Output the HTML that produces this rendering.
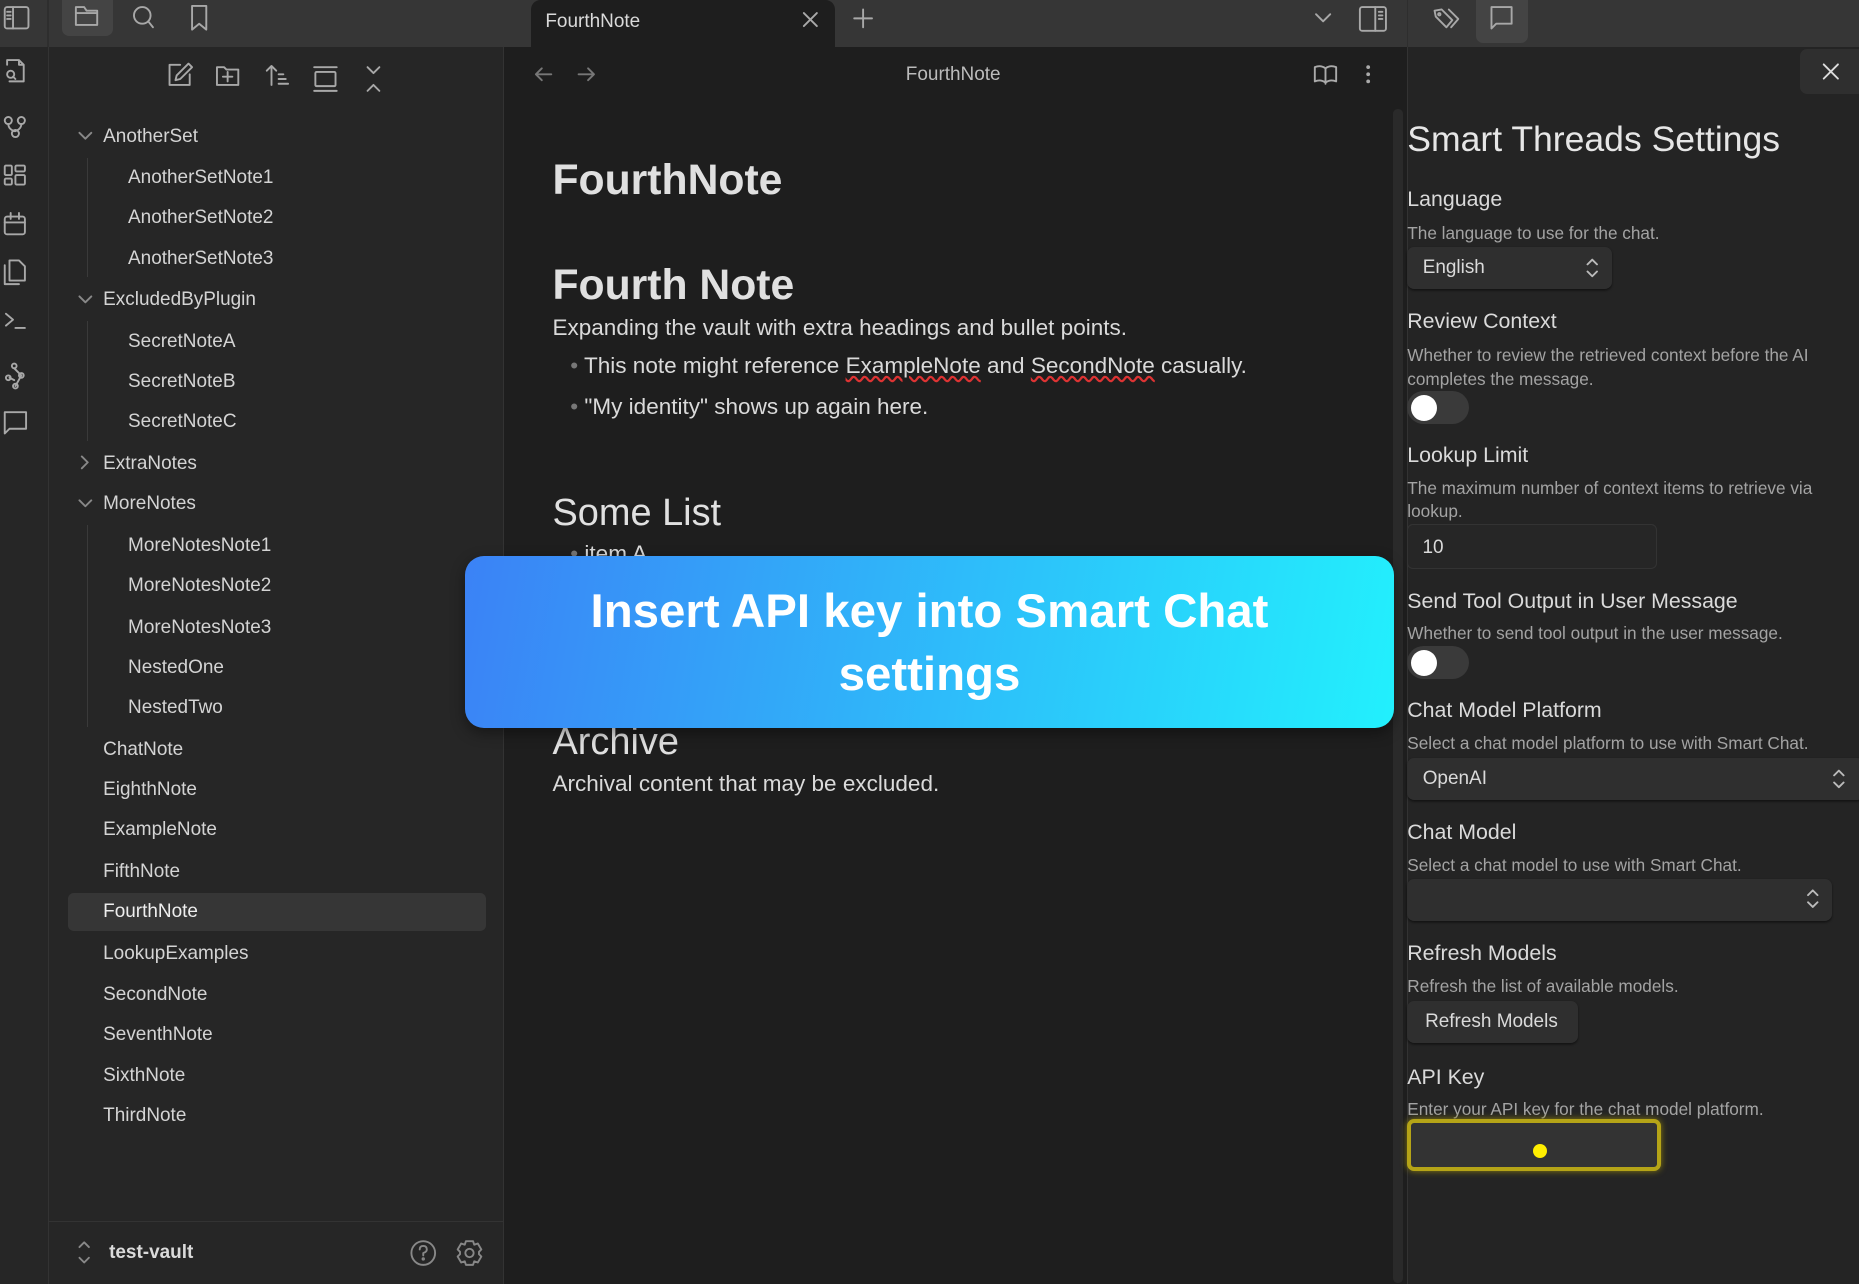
<!DOCTYPE html>
<html><head><meta charset="utf-8"><style>
*{box-sizing:border-box;margin:0;padding:0}
html,body{width:1859px;height:1284px;overflow:hidden;background:#1e1e1e}
#root{zoom:1.18559;width:1568px;height:1083px;position:relative;font-family:"Liberation Sans",sans-serif;color:#dadada;overflow:hidden}
.a{position:absolute}
svg.i{position:absolute;fill:none;stroke:#a8a8a8;stroke-width:1.6;stroke-linecap:round;stroke-linejoin:round}
.row{position:absolute;font-size:16px;color:#d4d4d4;white-space:nowrap}
.st{position:absolute;left:1187px;font-size:18px;color:#dadada;white-space:nowrap}
.sd{position:absolute;left:1187px;font-size:14.5px;color:#a3a3a3;line-height:20px;width:370px}
.tg{position:absolute;left:1187px;width:52px;height:28px;border-radius:14px;background:#3a3a3a}
.tg::after{content:"";position:absolute;left:3px;top:3px;width:22px;height:22px;border-radius:50%;background:#fff}
.sel{position:absolute;background:#2f2f2f;border-radius:6px;box-shadow:0 1px 2px rgba(0,0,0,.5);font-size:16px;color:#dadada;padding-left:13px;line-height:36px}
</style></head><body><div id="root">
<!-- top bar -->
<div class="a" style="left:0;top:0;width:1568px;height:40px;background:#363636"></div>
<div class="a" style="left:40px;top:0;width:1px;height:40px;background:#2e2e2e"></div>
<div class="a" style="left:1187px;top:0;width:1px;height:40px;background:#2e2e2e"></div>
<div class="a" style="left:52px;top:0;width:43px;height:30px;background:#444;border-radius:0 0 6px 6px"></div>
<div class="a" style="left:1245px;top:0;width:44px;height:36px;background:#444;border-radius:0 0 6px 6px"></div>
<div class="a" style="left:448px;top:0;width:256px;height:41px;background:#1e1e1e;border-radius:8px 8px 0 0"></div>
<div class="a" style="left:460px;top:9px;font-size:16px;color:#dadada">FourthNote</div>
<svg class="i" style="left:0;top:0" width="1568" height="40">
<rect x="4" y="6" width="20" height="18" rx="2"/><line x1="11" y1="6" x2="11" y2="24"/><line x1="6" y1="10" x2="9" y2="10"/><line x1="6" y1="13" x2="9" y2="13"/><line x1="6" y1="16" x2="9" y2="16"/>
<path d="M64 6h7l2 3h9v12H64z M64 11h18"/>
<circle cx="120" cy="13" r="7"/><line x1="125" y1="18" x2="129" y2="23"/>
<path d="M162 5h12v20l-6-5-6 5z"/>
<path d="M678 11l11 11M689 11l-11 11"/>
<path d="M728 8v15M720.5 15.5h15"/>
<path d="M1110 12l6 6 6-6"/>
<rect x="1147" y="6" width="22" height="20" rx="2"/><line x1="1160" y1="6" x2="1160" y2="26"/><line x1="1163" y1="10" x2="1166" y2="10"/><line x1="1163" y1="13" x2="1166" y2="13"/><line x1="1163" y1="16" x2="1166" y2="16"/>
<path d="M1210 9l6-1 9 9-5 6-9-9z M1222 8l8 8-6 7"/><circle cx="1214" cy="12" r="1"/>
<path d="M1258 6h17v14h-13l-4 4z"/>
</svg>
<!-- ribbon -->
<div class="a" style="left:0;top:40px;width:41px;height:1043px;background:#262626;border-right:1px solid #333"></div>
<svg class="i" style="left:0;top:40px" width="41" height="340">
<path d="M6 15v-4h10l4 4v14h-12 M16 11v4h4"/><circle cx="9" cy="23" r="3"/><line x1="11" y1="25" x2="13" y2="27"/>
<circle cx="7" cy="62" r="3"/><circle cx="18" cy="62" r="3"/><circle cx="13" cy="73" r="3"/><path d="M7 65q0 4 5 6M18 65q0 4-5 6"/>
<rect x="4" y="100" width="6" height="8" rx="1"/><rect x="13" y="100" width="8" height="5" rx="1"/><rect x="4" y="111" width="6" height="5" rx="1"/><rect x="13" y="108" width="8" height="8" rx="1"/>
<rect x="4" y="143" width="17" height="15" rx="2"/><line x1="4" y1="148" x2="21" y2="148"/><line x1="9" y1="140" x2="9" y2="145"/><line x1="16" y1="140" x2="16" y2="145"/>
<path d="M8 184v-4h8l5 5v12h-13z M4 184v16h12"/>
<path d="M5 225l6 5-6 5M13 237h8"/>
<circle cx="12" cy="269" r="2"/><circle cx="7" cy="279" r="2"/><circle cx="18" cy="277" r="2"/><circle cx="13" cy="286" r="2"/><path d="M12 271l6 6M18 277l-5 9M8 279l4 2"/>
<path d="M4 308h18v14h-14l-4 4z"/>
</svg>
<!-- sidebar -->
<div class="a" style="left:41px;top:40px;width:384px;height:1043px;background:#262626;border-right:1px solid #333"></div>
<svg class="i" style="left:0;top:40px" width="425" height="60">
<path d="M152 15h-9v17h17v-9 M148 28l1-4 10-10 3 3-10 10z"/>
<path d="M183 17h6l2 2h10v13h-18z M192 21v8M188 25h8"/>
<path d="M229 32v-16M225 20l4-4 4 4M235 23h4M235 27h6M235 31h8"/>
<rect x="266" y="21" width="17" height="12" rx="1"/><line x1="265" y1="17" x2="284" y2="17"/><line x1="265" y1="37" x2="284" y2="37"/>
<path d="M310 17l5 5 5-5M310 37l5-5 5 5"/>
</svg>
<div class="a" style="left:57px;top:753px;width:353px;height:32px;background:#363636;border-radius:5px"></div>
<div class="a" style="left:73px;top:133px;width:1px;height:101px;background:#3a3a3a"></div>
<div class="a" style="left:73px;top:271px;width:1px;height:101px;background:#3a3a3a"></div>
<div class="a" style="left:73px;top:443px;width:1px;height:170px;background:#3a3a3a"></div>
<svg class="i" style="left:0;top:0;stroke:#888" width="425" height="1083">
<path d="M67 112l5 5 5-5M67 250l5 5 5-5M69 385l5 5-5 5M67 422l5 5 5-5"/>
</svg>
<div class="row" style="left:87px;top:106px">AnotherSet</div>
<div class="row" style="left:108px;top:141px">AnotherSetNote1</div>
<div class="row" style="left:108px;top:175px">AnotherSetNote2</div>
<div class="row" style="left:108px;top:209px">AnotherSetNote3</div>
<div class="row" style="left:87px;top:244px">ExcludedByPlugin</div>
<div class="row" style="left:108px;top:279px">SecretNoteA</div>
<div class="row" style="left:108px;top:313px">SecretNoteB</div>
<div class="row" style="left:108px;top:347px">SecretNoteC</div>
<div class="row" style="left:87px;top:382px">ExtraNotes</div>
<div class="row" style="left:87px;top:416px">MoreNotes</div>
<div class="row" style="left:108px;top:451px">MoreNotesNote1</div>
<div class="row" style="left:108px;top:485px">MoreNotesNote2</div>
<div class="row" style="left:108px;top:520px">MoreNotesNote3</div>
<div class="row" style="left:108px;top:554px">NestedOne</div>
<div class="row" style="left:108px;top:588px">NestedTwo</div>
<div class="row" style="left:87px;top:623px">ChatNote</div>
<div class="row" style="left:87px;top:657px">EighthNote</div>
<div class="row" style="left:87px;top:691px">ExampleNote</div>
<div class="row" style="left:87px;top:726px">FifthNote</div>
<div class="row" style="left:87px;top:760px;color:#eee">FourthNote</div>
<div class="row" style="left:87px;top:795px">LookupExamples</div>
<div class="row" style="left:87px;top:830px">SecondNote</div>
<div class="row" style="left:87px;top:864px">SeventhNote</div>
<div class="row" style="left:87px;top:898px">SixthNote</div>
<div class="row" style="left:87px;top:932px">ThirdNote</div>
<div class="a" style="left:41px;top:1030px;width:384px;height:1px;background:#333"></div>
<div class="row" style="left:92px;top:1048px;font-weight:bold;color:#dadada">test-vault</div>
<svg class="i" style="left:0;top:1030px;stroke:#888" width="425" height="53">
<path d="M67 22l4-4 4 4M67 31l4 4 4-4"/>
<circle cx="357" cy="27" r="10"/><path d="M354 24q0-3 3-3t3 3q0 2-3 3v2"/><circle cx="357" cy="32" r=".6"/>
<circle cx="396" cy="27" r="3.5"/><path d="M393 17h6l1 3 3-1 3 5-2 2v2l2 2-3 5-3-1-1 3h-6l-1-3-3 1-3-5 2-2v-2l-2-2 3-5 3 1z"/>
</svg>
<!-- editor -->
<svg class="i" style="left:0;top:40px;stroke:#777" width="1187" height="50">
<path d="M452 23h13M457 18l-5 5 5 5M488 23h13M496 18l5 5-5 5"/>
<path style="stroke:#aaa" d="M1109 17q5-2 9 1 4-3 9-1v12q-5-2-9 1-4-3-9-1z M1118 18v13"/>
<circle style="fill:#aaa;stroke:none" cx="1154" cy="17" r="1.6"/><circle style="fill:#aaa;stroke:none" cx="1154" cy="23" r="1.6"/><circle style="fill:#aaa;stroke:none" cx="1154" cy="29" r="1.6"/>
</svg>
<div class="a" style="left:764px;top:54px;font-size:16px;color:#bbb">FourthNote</div>
<div class="a" style="left:1175px;top:92px;width:8px;height:990px;background:#2a2a2a;border-radius:4px"></div>
<div class="a" style="left:466px;top:132px;font-size:36px;font-weight:bold;color:#e0e0e0">FourthNote</div>
<div class="a" style="left:466px;top:220px;font-size:36px;font-weight:bold;color:#e0e0e0">Fourth Note</div>
<div class="a" style="left:466px;top:266px;font-size:19px;color:#dadada">Expanding the vault with extra headings and bullet points.</div>
<div class="a" style="left:481px;top:298px;font-size:19px;color:#dadada"><span style="color:#777">•</span> This note might reference <u style="text-decoration:underline wavy #d33">ExampleNote</u> and <u style="text-decoration:underline wavy #d33">SecondNote</u> casually.</div>
<div class="a" style="left:481px;top:332px;font-size:19px;color:#dadada"><span style="color:#777">•</span> "My identity" shows up again here.</div>
<div class="a" style="left:466px;top:415px;font-size:32px;color:#e0e0e0">Some List</div>
<div class="a" style="left:481px;top:456px;font-size:19px;color:#dadada"><span style="color:#777">•</span> item A</div>
<div class="a" style="left:466px;top:608px;font-size:32px;color:#e0e0e0">Archive</div>
<div class="a" style="left:466px;top:650px;font-size:19px;color:#dadada">Archival content that may be excluded.</div>
<!-- right panel -->
<div class="a" style="left:1187px;top:40px;width:381px;height:1043px;background:#242424;border-left:1px solid #333"></div>
<div class="a" style="left:1518px;top:41px;width:55px;height:38px;background:#2f2f2f;border-radius:6px"></div>
<svg class="i" style="left:1518px;top:41px;stroke:#ddd" width="50" height="38"><path d="M20 13l12 12M32 13l-12 12"/></svg>
<div class="st" style="top:100px;font-size:30px;color:#e6e6e6">Smart Threads Settings</div>
<div class="st" style="top:158px">Language</div>
<div class="sd" style="top:187px">The language to use for the chat.</div>
<div class="sel" style="left:1187px;top:208px;width:173px">English</div>
<div class="st" style="top:261px">Review Context</div>
<div class="sd" style="top:290px">Whether to review the retrieved context before the AI completes the message.</div>
<div class="tg" style="top:330px"></div>
<div class="st" style="top:374px">Lookup Limit</div>
<div class="sd" style="top:402px">The maximum number of context items to retrieve via lookup.</div>
<div class="a" style="left:1187px;top:442px;width:211px;height:38px;background:#262626;border:1px solid #333;border-radius:5px;font-size:16px;padding:10px 12px">10</div>
<div class="st" style="top:497px">Send Tool Output in User Message</div>
<div class="sd" style="top:525px">Whether to send tool output in the user message.</div>
<div class="tg" style="top:545px"></div>
<div class="st" style="top:589px">Chat Model Platform</div>
<div class="sd" style="top:617px">Select a chat model platform to use with Smart Chat.</div>
<div class="sel" style="left:1187px;top:639px;width:385px">OpenAI</div>
<div class="st" style="top:692px">Chat Model</div>
<div class="sd" style="top:720px">Select a chat model to use with Smart Chat.</div>
<div class="sel" style="left:1187px;top:741px;width:358px;height:36px"></div>
<svg class="i" style="left:0;top:0;stroke:#bbb" width="1568" height="800">
<path d="M1339 223l4-4 4 4M1339 229l4 4 4-4M1547 654l4-4 4 4M1547 660l4 4 4-4M1525 755l4-4 4 4M1525 761l4 4 4-4"/>
</svg>
<div class="st" style="top:794px">Refresh Models</div>
<div class="sd" style="top:822px">Refresh the list of available models.</div>
<div class="sel" style="left:1187px;top:844px;width:144px;padding-left:15px">Refresh Models</div>
<div class="st" style="top:898px">API Key</div>
<div class="sd" style="top:926px">Enter your API key for the chat model platform.</div>
<div class="a" style="left:1187px;top:944px;width:214px;height:44px;border:4px solid #b5a417;border-radius:6px;background:#333;box-shadow:0 0 6px #8a7d10"></div>
<div class="a" style="left:1293px;top:965px;width:12px;height:12px;border-radius:50%;background:#ffee00"></div>
<!-- banner -->
<div class="a" style="left:392px;top:469px;width:784px;height:145px;border-radius:16px;background:linear-gradient(100deg,#3b82f6,#22f0fd);box-shadow:0 4px 12px rgba(0,0,0,.4);color:#fff;font-weight:bold;font-size:40px;text-align:center;line-height:53px;padding-top:21px">Insert API key into Smart Chat<br>settings</div>
</div></body></html>
